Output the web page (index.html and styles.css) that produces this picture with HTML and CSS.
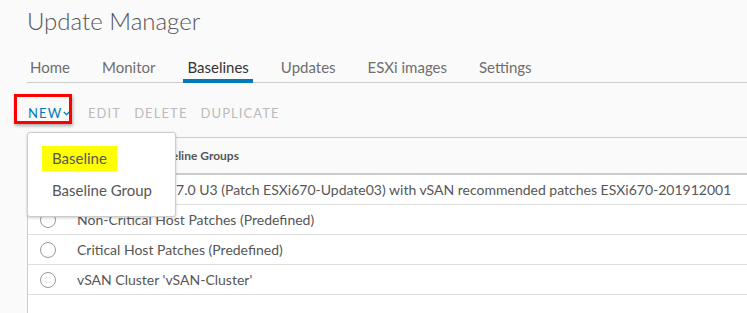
FILE: index.html
```html
<!DOCTYPE html>
<html>
<head>
<meta charset="utf-8">
<link rel="stylesheet" href="styles.css">
</head>
<body>
<div class="page">
  <h1 class="title">Update Manager</h1>
  <nav class="tabs">
    <span class="tab">Home</span>
    <span class="tab">Monitor</span>
    <span class="tab active">Baselines</span>
    <span class="tab">Updates</span>
    <span class="tab">ESXi images</span>
    <span class="tab">Settings</span>
  </nav>
  <div class="toolbar">
    <button class="btn new">NEW<svg class="chev" width="7" height="5" viewBox="0 0 7 5"><path d="M0.8 1 L3.5 3.7 L6.2 1" fill="none" stroke="#0079b8" stroke-width="1.2"/></svg></button>
    <button class="btn disabled">EDIT</button>
    <button class="btn disabled">DELETE</button>
    <button class="btn disabled">DUPLICATE</button>
  </div>
  <div class="grid">
    <div class="grid-head"><span class="head-cell">Baselines and Baseline Groups</span></div>
    <div class="row"><span class="radio"></span><span class="cell">VMware ESXi 6.7.0 U3 (Patch ESXi670-Update03) with vSAN recommended patches ESXi670-201912001</span></div>
    <div class="row"><span class="radio"></span><span class="cell">Non-Critical Host Patches (Predefined)</span></div>
    <div class="row"><span class="radio"></span><span class="cell">Critical Host Patches (Predefined)</span></div>
    <div class="row"><span class="radio"></span><span class="cell">vSAN Cluster 'vSAN-Cluster'</span></div>
    <div class="grid-fill"></div>
  </div>
  <div class="menu">
    <div class="menu-item"><span class="hl">Baseline</span></div>
    <div class="menu-item second">Baseline Group</div>
  </div>
</div>
</body>
</html>
```
FILE: styles.css
```css
* { box-sizing: border-box; }
html, body { margin: 0; padding: 0; height: 100%; overflow: hidden; }
body {
  background: #fafafa;
  font-family: Lato, "Open Sans", sans-serif;
  color: #565656;
}
.page {
  position: relative;
  padding-left: 27px;
  height: 313px;
  display: flex;
  flex-direction: column;
}
.title {
  margin: 0;
  padding-top: 6px;
  height: 58px;
  font-size: 24px;
  font-weight: 300;
  color: #565656;
  line-height: 30px;
  flex: none;
}
.tabs {
  display: flex;
  gap: 26px;
  height: 25px;
  border-bottom: 1px solid #cccccc;
  flex: none;
}
.tab {
  font-size: 15px;
  color: #6e6e6e;
  padding: 0 3px;
  line-height: 18px;
  height: 25px;
}
.tab.active {
  color: #333333;
  border-bottom: 4px solid #0079b8;
  padding: 0 4px;
  margin: 0 -1px -1px;
}
.toolbar {
  display: flex;
  align-items: flex-start;
  margin-left: -13px;
  margin-top: 11px;
  height: 30px;
  flex: none;
}
.btn {
  background: none;
  border: none;
  font-family: inherit;
  font-size: 13px;
  letter-spacing: 1.1px;
  padding: 11px 0 0;
  margin-right: 13px;
  line-height: 16px;
}
.btn.new {
  color: #0079b8;
  border: 3px solid #ff0000;
  width: 58px;
  height: 30px;
  padding: 8px 0 0 11px;
  box-shadow: 1px 2px 3px rgba(0,0,0,0.3);
  display: flex;
  align-items: flex-start;
  margin-right: 16px;
}
.chev { margin: 6px 0 0 1px; flex: none; }
.btn.disabled { color: #bbbbbb; }
.grid {
  margin-top: 13px;
  flex: 1;
  border-left: 1px solid #cccccc;
  border-top: 1px solid #cccccc;
  display: flex;
  flex-direction: column;
}
.grid-head {
  height: 37px;
  flex: none;
  background: #fafafa;
  border-bottom: 2px solid #cccccc;
  display: flex;
  align-items: center;
  padding-left: 49px;
}
.head-cell {
  font-size: 12px;
  font-weight: 700;
  color: #565656;
}
.row {
  height: 30px;
  flex: none;
  background: #ffffff;
  border-bottom: 1px solid #dddddd;
  display: flex;
  align-items: center;
  padding-left: 12px;
}
.radio {
  width: 16px;
  height: 16px;
  border: 1px solid #999999;
  border-radius: 50%;
  background: #fff;
  margin-right: 21px;
  flex: none;
}
.cell {
  font-size: 14px;
  color: #565656;
  white-space: nowrap;
}
.grid-fill { flex: 1; background: #ffffff; }
.menu {
  position: absolute;
  left: 27px;
  top: 132px;
  width: 149px;
  height: 85px;
  background: #ffffff;
  border: 1px solid #cccccc;
  border-radius: 3px;
  box-shadow: 0 1px 3px rgba(0,0,0,0.2);
  padding: 13px 0 0 14px;
}
.menu-item {
  font-size: 15px;
  color: #565656;
  height: 30px;
  line-height: 25px;
}
.hl {
  display: inline-block;
  background: #ffff00;
  padding: 0 10px;
  height: 25px;
}
.menu-item.second { padding-left: 10px; line-height: 28px; }
```
